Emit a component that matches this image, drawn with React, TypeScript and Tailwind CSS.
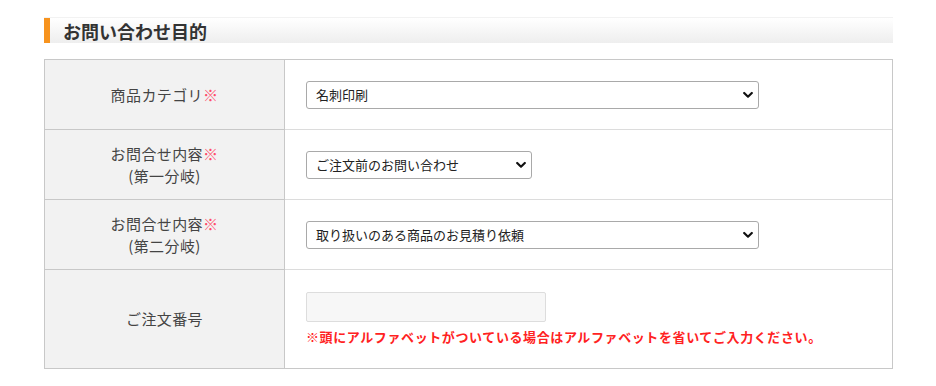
import React from "react";

const font = { fontFamily: '"Noto Sans CJK JP", "Noto Sans", sans-serif' };

function Chevron() {
  return (
    <svg width="10" height="7" viewBox="0 0 10 7" className="absolute right-[6px] top-1/2 -translate-y-1/2 pointer-events-none">
      <path d="M1.2 1.5 L5 5.2 L8.8 1.5" fill="none" stroke="#111" strokeWidth="2.2" strokeLinecap="round" strokeLinejoin="round" />
    </svg>
  );
}

function Select({ value, w }: { value: string; w: string }) {
  return (
    <div className={`relative ${w}`}>
      <select
        defaultValue={value}
        className="appearance-none w-full h-[28px] border border-[#a9a9a9] rounded-[3px] bg-white pl-[9px] pr-6 text-[13px] text-[#222] outline-none"
        style={font}
      >
        <option>{value}</option>
      </select>
      <Chevron />
    </div>
  );
}

function Label({ lines }: { lines: string[] }) {
  return (
    <div className="bg-[#f2f2f2] border-r border-[#c8c8c8] flex flex-col items-center justify-center text-[15px] leading-[22px] text-[#444] tracking-[0.4px]">
      <div>
        {lines[0]}
        <span className="text-[#ff4d6a]">※</span>
      </div>
      {lines[1] && <div>{lines[1]}</div>}
    </div>
  );
}

export default function App() {
  return (
    <div className="bg-white w-[936px] h-[386px] pt-[17px] pl-[44px]" style={font}>
      <div className="w-[849px] h-[26px] flex items-stretch border-t border-[#f2f2f2] bg-gradient-to-b from-white to-[#eeeeee]">
        <div className="w-[6px] bg-[#f7931e]" />
        <div className="pl-[13px] flex items-center text-[18px] font-bold text-[#333] leading-none">
          お問い合わせ目的
        </div>
      </div>
      <div className="mt-[16px] w-[849px] border border-[#c8c8c8] grid grid-cols-[240px_1fr]">
        {/* row 1 */}
        <div className="h-[69px] grid">
          <Label lines={["商品カテゴリ"]} />
        </div>
        <div className="h-[69px] flex items-center pl-[21px]">
          <Select value="名刺印刷" w="w-[453px]" />
        </div>
        {/* row 2 */}
        <div className="h-[70px] grid border-t border-[#c8c8c8]">
          <Label lines={["お問合せ内容", "(第一分岐)"]} />
        </div>
        <div className="h-[70px] flex items-center pl-[21px] border-t border-[#dcdcdc]">
          <Select value="ご注文前のお問い合わせ" w="w-[226px]" />
        </div>
        {/* row 3 */}
        <div className="h-[70px] grid border-t border-[#c8c8c8]">
          <Label lines={["お問合せ内容", "(第二分岐)"]} />
        </div>
        <div className="h-[70px] flex items-center pl-[21px] border-t border-[#dcdcdc]">
          <Select value="取り扱いのある商品のお見積り依頼" w="w-[453px]" />
        </div>
        {/* row 4 */}
        <div className="h-[99px] grid border-t border-[#c8c8c8]">
          <div className="bg-[#f2f2f2] border-r border-[#c8c8c8] flex items-center justify-center text-[15px] text-[#444] tracking-[0.4px]">
            ご注文番号
          </div>
        </div>
        <div className="h-[99px] flex flex-col justify-center pl-[21px] border-t border-[#dcdcdc]">
          <input
            type="text"
            className="w-[240px] h-[30px] bg-[#f7f7f7] border border-[#dddddd] rounded-[2px] outline-none"
          />
          <div className="mt-[5px] text-[13px] leading-[20px] font-bold text-[#ff2222] tracking-[0.6px]">
            ※頭にアルファベットがついている場合はアルファベットを省いてご入力ください。
          </div>
        </div>
      </div>
    </div>
  );
}
